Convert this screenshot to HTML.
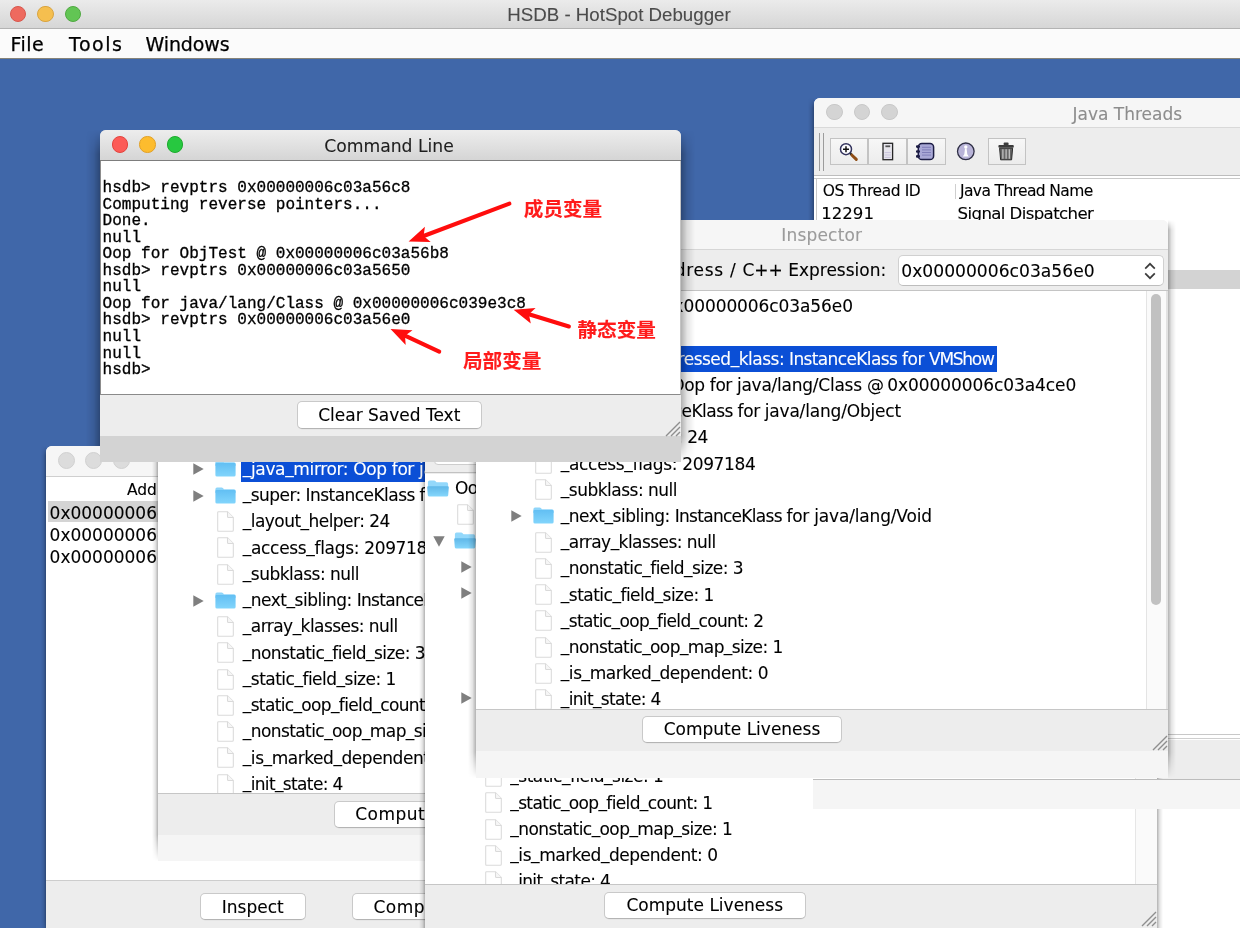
<!DOCTYPE html>
<html lang="zh"><head><meta charset="utf-8"><title>HSDB - HotSpot Debugger</title>
<style>
html,body{margin:0;padding:0}
body{width:1240px;height:928px;overflow:hidden;position:relative;background:#4067a9;font-family:"DejaVu Sans", "Liberation Sans", sans-serif;font-size:17px;color:#000;-webkit-font-smoothing:antialiased;-webkit-text-stroke:.1px currentColor}
#root{position:absolute;left:0;top:0;width:1240px;height:928px;overflow:hidden;will-change:transform}
*{box-sizing:border-box}
.abs,.win,.row,.lbl,.tl,.ico,.tri,.btn,.t{position:absolute}
.tl{border-radius:50%;border:1px solid;display:block}
.win{overflow:hidden;background:#fff}
.shl,.shr{position:absolute}
.shl{background:linear-gradient(to left,rgba(0,0,0,.30),rgba(0,0,0,.10) 45%,rgba(0,0,0,0))}
.shr{background:linear-gradient(to right,rgba(0,0,0,.30),rgba(0,0,0,.10) 45%,rgba(0,0,0,0))}
.row{left:0;height:26px;width:100%;white-space:pre}
.lbl{top:0;height:26.2px;line-height:27.4px;padding:0 1.5px;white-space:pre;font-size:17px}
.lbl i{font-style:normal;position:relative;top:-1.8px}
.lbl.sel{background:#0b4fd6;color:#fff;padding-right:3px}
.t{white-space:pre;line-height:20px}
.btn{background:#fff;border:1px solid #c9c9c9;border-bottom-color:#b4b4b4;border-radius:5px;text-align:center;white-space:pre;box-shadow:0 .5px 0 rgba(0,0,0,.06)}
.btn span{position:relative;display:inline-block}
.panel{position:absolute;background:#ededed}
.mono{font-family:"Liberation Mono","DejaVu Sans Mono",monospace}
.cn{position:absolute;font-family:"Liberation Sans","Noto Sans CJK SC","WenQuanYi Zen Hei",sans-serif;font-weight:bold;color:#ff1b1b;font-size:19.6px;line-height:24px;white-space:pre}
.grip{position:absolute}
</style></head><body>
<svg width="0" height="0" style="position:absolute">
<defs>
<linearGradient id="fg" x1="0" y1="0" x2="0" y2="1"><stop offset="0" stop-color="#62bff3"/><stop offset="1" stop-color="#82d5fc"/></linearGradient>
<linearGradient id="fg2" x1="0" y1="0" x2="0" y2="1"><stop offset="0" stop-color="#5fb7e8"/><stop offset="1" stop-color="#86d7fc"/></linearGradient>
<symbol id="folder" viewBox="0 0 21 17">
<path d="M0.4 2.2 Q0.4 0.5 2 0.5 L6.6 0.5 Q7.5 0.5 8.1 1.2 L9 2.3 L19 2.3 Q20.6 2.3 20.6 3.9 L20.6 6 L0.4 6Z" fill="#8ed5fa"/>
<path d="M0.4 4 Q0.4 2.9 1.5 2.9 L19.5 2.9 Q20.6 2.9 20.6 4 L20.6 15 Q20.6 16.6 19 16.6 L2 16.6 Q0.4 16.6 0.4 15Z" fill="url(#fg)"/>
</symbol>
<symbol id="folderopen" viewBox="0 0 22 17">
<path d="M0.9 2.2 Q0.9 0.5 2.5 0.5 L7.1 0.5 Q8 0.5 8.6 1.2 L9.5 2.3 L19.5 2.3 Q21.1 2.3 21.1 3.9 L21.1 9 L0.9 9Z" fill="#93d8fb"/>
<path d="M0.2 7.4 Q0.1 6.2 1.3 6.2 L20.7 6.2 Q21.9 6.2 21.8 7.4 L21.2 15.2 Q21.1 16.6 19.6 16.6 L2.4 16.6 Q0.9 16.6 0.8 15.2Z" fill="url(#fg2)"/>
</symbol>
<symbol id="file" viewBox="0 0 17 21">
<path d="M1.5 0.7 L10.5 0.7 L16.3 6.5 L16.3 19.3 Q16.3 20.3 15.3 20.3 L1.5 20.3 Q0.7 20.3 0.7 19.3 L0.7 1.5 Q0.7 0.7 1.5 0.7Z" fill="#fff" stroke="#dadada" stroke-width="1.05"/>
<path d="M10.5 0.7 L10.5 5.5 Q10.5 6.5 11.5 6.5 L16.3 6.5" fill="#f6f6f6" stroke="#dadada" stroke-width="1.05"/>
</symbol>
<symbol id="grip" viewBox="0 0 16 16">
<path d="M1 15 L15 1 M6 15 L15 6 M11 15 L15 11" stroke="#8e8e8e" stroke-width="1.35" fill="none"/>
</symbol>
</defs></svg>
<div id="root">

<!-- ===== main window chrome ===== -->
<div class="abs" style="left:0;top:0;width:1240px;height:28.5px;background:linear-gradient(#ebebeb,#d6d6d6);border-bottom:1px solid #b3b3b3"></div>
<i class="tl" style="left:9.75px;top:5.55px;width:16.5px;height:16.5px;background:#ee6a5f;border-color:#d8574d"></i><i class="tl" style="left:37.25px;top:5.55px;width:16.5px;height:16.5px;background:#f5bf4f;border-color:#d9a441"></i><i class="tl" style="left:64.75px;top:5.55px;width:16.5px;height:16.5px;background:#62c554;border-color:#50a942"></i>
<div class="t" style="left:0;width:1240px;top:4.5px;text-align:center;font-family:'Liberation Sans',sans-serif;font-size:18.7px;color:#4b4b4b;letter-spacing:0px"><span style="position:relative;left:-1px">HSDB - HotSpot Debugger</span></div>
<div class="abs" style="left:0;top:28.5px;width:1240px;height:30px;background:#fbfbfb;border-bottom:1.2px solid #868379"></div>
<div class="t" style="left:10.6px;top:33.8px;font-size:19px;letter-spacing:.45px;-webkit-text-stroke:.25px #000">File</div>
<div class="t" style="left:69px;top:33.8px;font-size:19px;letter-spacing:1.55px;-webkit-text-stroke:.25px #000">Tools</div>
<div class="t" style="left:145.5px;top:33.8px;font-size:19px;letter-spacing:-.12px;-webkit-text-stroke:.25px #000">Windows</div>

<!-- ===== Java Threads window ===== -->
<div class="shl" style="left:808px;top:98px;width:6px;height:830px;-webkit-mask-image:linear-gradient(to bottom,transparent,#000 10px,#000 calc(100% - 26px),transparent);mask-image:linear-gradient(to bottom,transparent,#000 10px,#000 calc(100% - 26px),transparent)"></div>
<div class="win" style="left:814px;top:98px;width:640px;height:830px;border-radius:6px 6px 0 0;background:#fff">
  <div class="abs" style="left:0;top:0;width:100%;height:29.5px;background:#f6f6f6;border-bottom:1px solid #d9d9d9"></div>
  <i class="tl" style="left:12.15px;top:5.75px;width:16.5px;height:16.5px;background:#d4d4d4;border-color:#c8c8c8"></i><i class="tl" style="left:39.65px;top:5.75px;width:16.5px;height:16.5px;background:#d4d4d4;border-color:#c8c8c8"></i><i class="tl" style="left:67.15px;top:5.75px;width:16.5px;height:16.5px;background:#d4d4d4;border-color:#c8c8c8"></i>
  <div class="t" style="left:258.5px;top:6px;color:#8d8d8d">Java Threads</div>
  <div class="abs" style="left:0;top:29.5px;width:100%;height:48px;background:#ededed;border-bottom:1.5px solid #bdbdbd"></div>
  <div class="abs" style="left:5px;top:34.5px;width:1px;height:38px;background:#9c9c9c"></div>
  <div class="abs" style="left:9px;top:34.5px;width:1px;height:38px;background:#9c9c9c"></div>
  <div class="abs tb" style="left:16.4px;top:40.3px;width:38px;height:27px;border:1px solid #c3c3c3;background:linear-gradient(#f7f7f7,#ececec)"></div>
  <div class="abs tb" style="left:53.9px;top:40.3px;width:39.5px;height:27px;border:1px solid #c3c3c3;background:linear-gradient(#f7f7f7,#ececec)"></div>
  <div class="abs tb" style="left:92.9px;top:40.3px;width:39.5px;height:27px;border:1px solid #c3c3c3;background:linear-gradient(#f7f7f7,#ececec)"></div>
  <div class="abs tb" style="left:173.5px;top:40.3px;width:38.5px;height:27px;border:1px solid #c3c3c3;background:linear-gradient(#f7f7f7,#ececec)"></div>
  <svg class="abs" style="left:16px;top:39.8px" width="200" height="32" viewBox="0 0 200 32">
    <!-- magnifier -->
    <circle cx="16" cy="11.2" r="5.5" fill="#fcfcff" stroke="#34345e" stroke-width="1.5"/>
    <path d="M13 11.2 H19 M16 8.2 V14.2" stroke="#111" stroke-width="1.5"/>
    <path d="M20.2 15.3 L22 17.1" stroke="#222" stroke-width="2.2"/>
    <path d="M22 17.2 L26.3 21.4" stroke="#8f4e16" stroke-width="3" stroke-linecap="round"/>
    <!-- doc -->
    <rect x="53" y="5.3" width="9.6" height="16.4" fill="#e6e5ec" stroke="#262626" stroke-width="1.3"/>
    <rect x="55.4" y="7.4" width="4.8" height="1.8" fill="#555"/>
    <path d="M54.6 14.6 H61 M54.6 17 H61 M54.6 19.4 H61" stroke="#c9c3dc" stroke-width="1"/>
    <!-- notebook -->
    <rect x="88.3" y="5.4" width="15.3" height="16.2" rx="3.6" fill="#a9a8d6" stroke="#1d1d45" stroke-width="1.5"/>
    <path d="M92 9.3 H101 M92 11.9 H101 M92 14.5 H101 M92 17.1 H101" stroke="#807eb9" stroke-width="1"/>
    <path d="M87.2 8.6 h1.6 M87.2 13.5 h1.6 M87.2 18.4 h1.6" stroke="#1d1d45" stroke-width="2.6" stroke-linecap="round"/>
    <!-- info circle -->
    <circle cx="135.8" cy="13.3" r="8.3" fill="#b9b4d8" stroke="#2f2f45" stroke-width="1.3"/>
    <circle cx="135.8" cy="9" r="1.7" fill="#fff"/>
    <path d="M135 10.4 L134.3 16.2 L132.8 18.4 L138.8 18.4 L137.3 16.2 L136.6 10.4Z" fill="#fff"/>
    <!-- trash -->
    <path d="M169.6 10.2 H182.6 L181.6 21.8 H170.6Z" fill="#666" stroke="#2a2a2a" stroke-width="1"/>
    <path d="M172.9 11.2 V20.8 M176.1 11.2 V20.8 M179.3 11.2 V20.8" stroke="#c9c9c9" stroke-width="1.2"/>
    <rect x="168.4" y="6.9" width="15.4" height="2.8" rx="1" fill="#3c3c3c"/>
    <rect x="173.6" y="4.6" width="5" height="2.6" rx="1" fill="#3c3c3c"/>
  </svg>
  <div class="abs" style="left:0;top:80px;width:100%;height:1.2px;background:#c9c9c9"></div>
  <div class="abs" style="left:2.3px;top:80px;width:1.2px;height:700px;background:#c9c9c9"></div>
  <div class="abs" style="left:141.3px;top:85.5px;width:1px;height:15px;background:#cfcfcf"></div>
  <div class="t" style="left:8.8px;top:83px;font-size:15.5px;letter-spacing:-.42px">OS Thread ID</div>
  <div class="t" style="left:146px;top:83px;font-size:15.5px;letter-spacing:-.62px">Java Thread Name</div>
  <div class="t" style="left:7.2px;top:106.2px;font-size:16.6px">12291</div>
  <div class="t" style="left:143.6px;top:106.2px;font-size:16.6px;letter-spacing:-.62px">Signal Dispatcher</div>
  <!-- right side artefacts -->
  <div class="abs" style="left:0;top:172px;width:100%;height:19.2px;background:#d3d3d3"></div>
  <div class="abs" style="left:0;top:635.6px;width:100%;height:1.4px;background:#c8c8c8"></div>
  <div class="abs" style="left:0;top:639.6px;width:100%;height:1.4px;background:#cfcfcf"></div>
  <div class="abs" style="left:0;top:641.5px;width:100%;height:40px;background:#ededed"></div>
</div>

<!-- ===== window 1 (bottom-left, liveness result) ===== -->
<div class="shl" style="left:41px;top:446px;width:5px;height:500px;-webkit-mask-image:linear-gradient(to bottom,transparent,#000 10px,#000 calc(100% - 26px),transparent);mask-image:linear-gradient(to bottom,transparent,#000 10px,#000 calc(100% - 26px),transparent)"></div>
<div class="win" style="left:46px;top:446px;width:520px;height:500px;border-radius:6px 6px 0 0">
  <div class="abs" style="left:0;top:0;width:100%;height:30.5px;background:#f6f6f6;border-bottom:1.3px solid #cfcfcf"></div>
  <i class="tl" style="left:11.80px;top:5.80px;width:17px;height:17px;background:#dcdcdc;border-color:#d0d0d0"></i><i class="tl" style="left:39.30px;top:5.80px;width:17px;height:17px;background:#dcdcdc;border-color:#d0d0d0"></i><i class="tl" style="left:66.80px;top:5.80px;width:17px;height:17px;background:#dcdcdc;border-color:#d0d0d0"></i>
  <div class="t" style="left:81px;top:34px;font-size:15.5px;letter-spacing:-.1px">Address</div>
  <div class="abs" style="left:2px;top:55px;width:300px;height:21px;background:#d4d4d4"></div>
  <div class="t" style="left:3.6px;top:56.5px">0x00000006c03a56b8</div>
  <div class="t" style="left:3.6px;top:78.8px">0x00000006c039e3c8</div>
  <div class="t" style="left:3.6px;top:101px">0x00000006c03a5650</div>
  <div class="panel" style="left:0;top:433.5px;width:100%;height:70px;border-top:1.3px solid #cdcdcd"></div>
  <div class="btn" style="left:154px;top:447.2px;width:105.5px;height:27px;line-height:26.4px">Inspect</div>
  <div class="btn" style="left:306px;top:447.2px;width:200px;height:27px;line-height:26.4px;text-align:left;padding-left:20.5px"><span style="letter-spacing:.45px">Comput</span>e Liveness</div>
</div>

<!-- ===== Inspector 2 ===== -->
<div class="shl" style="left:151.5px;top:380px;width:6px;height:481px;-webkit-mask-image:linear-gradient(to bottom,transparent,#000 10px,#000 calc(100% - 26px),transparent);mask-image:linear-gradient(to bottom,transparent,#000 10px,#000 calc(100% - 26px),transparent)"></div>
<div class="win" style="left:157.5px;top:380px;width:560px;height:481.3px;background:#f5f5f5">
  <div class="abs" style="left:0;top:0;width:100%;height:414.2px;background:#fff;border-bottom:1.2px solid #c6c6c6;overflow:hidden">
    <div class="row" style="top:-2.90px"><svg class="ico" style="left:1.70px;top:5px" width="22" height="17"><use href="#folderopen"/></svg><span class="lbl" style="left:28.50px;letter-spacing:-0.550px">Oop for ObjTest @ 0x00000006c03a56c8</span></div>
<div class="row" style="top:23.35px"><svg class="ico" style="left:32.00px;top:2.7px" width="17" height="21"><use href="#file"/></svg><span class="lbl" style="left:56.00px;letter-spacing:-0.550px"><i>_</i>mark: 1</span></div>
<div class="row" style="top:49.60px"><svg class="tri" style="left:8.00px;top:8.5px" width="12" height="11" viewBox="0 0 12 11"><path d="M0.3 0.3 L11.7 0.3 L6 10.7Z" fill="#7f7f7f"/></svg><svg class="ico" style="left:29.20px;top:5px" width="22" height="17"><use href="#folderopen"/></svg><span class="lbl" style="left:56.00px;letter-spacing:-0.550px"><i>_</i>metadata.<i>_</i>compressed<i>_</i>klass: InstanceKlass for ObjTest</span></div>
<div class="row" style="top:75.85px"><svg class="tri" style="left:35.80px;top:7.5px" width="11" height="12" viewBox="0 0 11 12"><path d="M0.3 0.3 L10.7 6 L0.3 11.7Z" fill="#7f7f7f"/></svg><svg class="ico" style="left:57.80px;top:4.5px" width="21" height="17"><use href="#folder"/></svg><span class="lbl sel" style="left:83.80px"><span style="letter-spacing:-0.357px"><i>_</i>java<i>_</i>mirror: Oop </span><span style="letter-spacing:-0.420px">for </span><span style="letter-spacing:-0.239px">java/lang/Class </span><span style="letter-spacing:-1.053px">@ </span><span style="letter-spacing:-0.075px">0x00000006c03a4ce0</span></span></div>
<div class="row" style="top:102.10px"><svg class="tri" style="left:35.80px;top:7.5px" width="11" height="12" viewBox="0 0 11 12"><path d="M0.3 0.3 L10.7 6 L0.3 11.7Z" fill="#7f7f7f"/></svg><svg class="ico" style="left:57.80px;top:4.5px" width="21" height="17"><use href="#folder"/></svg><span class="lbl" style="left:83.80px"><span style="letter-spacing:-0.551px"><i>_</i>super: InstanceKlass </span><span style="letter-spacing:-0.420px">for </span><span style="letter-spacing:-0.179px">java/lang/Object</span></span></div>
<div class="row" style="top:128.35px"><svg class="ico" style="left:59.80px;top:2.7px" width="17" height="21"><use href="#file"/></svg><span class="lbl" style="left:83.80px;letter-spacing:-0.545px"><i>_</i>layout<i>_</i>helper: 24</span></div>
<div class="row" style="top:154.60px"><svg class="ico" style="left:59.80px;top:2.7px" width="17" height="21"><use href="#file"/></svg><span class="lbl" style="left:83.80px"><span style="letter-spacing:-0.320px"><i>_</i>access<i>_</i>flags: </span><span style="letter-spacing:-0.360px">2097184</span></span></div>
<div class="row" style="top:180.85px"><svg class="ico" style="left:59.80px;top:2.7px" width="17" height="21"><use href="#file"/></svg><span class="lbl" style="left:83.80px;letter-spacing:-0.503px"><i>_</i>subklass: null</span></div>
<div class="row" style="top:207.10px"><svg class="tri" style="left:35.80px;top:7.5px" width="11" height="12" viewBox="0 0 11 12"><path d="M0.3 0.3 L10.7 6 L0.3 11.7Z" fill="#7f7f7f"/></svg><svg class="ico" style="left:57.80px;top:4.5px" width="21" height="17"><use href="#folder"/></svg><span class="lbl" style="left:83.80px"><span style="letter-spacing:-0.486px"><i>_</i>next<i>_</i>sibling: </span><span style="letter-spacing:-0.708px">InstanceKlass </span><span style="letter-spacing:-0.270px">for </span><span style="letter-spacing:-0.165px">java/lang/Void</span></span></div>
<div class="row" style="top:233.35px"><svg class="ico" style="left:59.80px;top:2.7px" width="17" height="21"><use href="#file"/></svg><span class="lbl" style="left:83.80px;letter-spacing:-0.546px"><i>_</i>array<i>_</i>klasses: null</span></div>
<div class="row" style="top:259.60px"><svg class="ico" style="left:59.80px;top:2.7px" width="17" height="21"><use href="#file"/></svg><span class="lbl" style="left:83.80px;letter-spacing:-0.563px"><i>_</i>nonstatic<i>_</i>field<i>_</i>size: 3</span></div>
<div class="row" style="top:285.85px"><svg class="ico" style="left:59.80px;top:2.7px" width="17" height="21"><use href="#file"/></svg><span class="lbl" style="left:83.80px;letter-spacing:-0.509px"><i>_</i>static<i>_</i>field<i>_</i>size: 1</span></div>
<div class="row" style="top:312.10px"><svg class="ico" style="left:59.80px;top:2.7px" width="17" height="21"><use href="#file"/></svg><span class="lbl" style="left:83.80px;letter-spacing:-0.645px"><i>_</i>static<i>_</i>oop<i>_</i>field<i>_</i>count: 1</span></div>
<div class="row" style="top:338.35px"><svg class="ico" style="left:59.80px;top:2.7px" width="17" height="21"><use href="#file"/></svg><span class="lbl" style="left:83.80px;letter-spacing:-0.581px"><i>_</i>nonstatic<i>_</i>oop<i>_</i>map<i>_</i>size: 1</span></div>
<div class="row" style="top:364.60px"><svg class="ico" style="left:59.80px;top:2.7px" width="17" height="21"><use href="#file"/></svg><span class="lbl" style="left:83.80px;letter-spacing:-0.441px"><i>_</i>is<i>_</i>marked<i>_</i>dependent: 0</span></div>
<div class="row" style="top:390.85px"><svg class="ico" style="left:59.80px;top:2.7px" width="17" height="21"><use href="#file"/></svg><span class="lbl" style="left:83.80px;letter-spacing:-0.643px"><i>_</i>init<i>_</i>state: 4</span></div>
  </div>
  <div class="panel" style="left:0;top:414.2px;width:100%;height:40.8px"></div>
  <div class="btn" style="left:176.3px;top:420.5px;width:200px;height:27px;line-height:24.6px;text-align:left;padding-left:20.5px"><span style="letter-spacing:.45px">Comput</span>e Liveness</div>
</div>

<!-- ===== Inspector 3 ===== -->
<div class="shl" style="left:419px;top:400px;width:6px;height:560px;-webkit-mask-image:linear-gradient(to bottom,transparent,#000 10px,#000 calc(100% - 26px),transparent);mask-image:linear-gradient(to bottom,transparent,#000 10px,#000 calc(100% - 26px),transparent)"></div><div class="shr" style="left:1157px;top:400px;width:6px;height:560px;-webkit-mask-image:linear-gradient(to bottom,transparent,#000 10px,#000 calc(100% - 26px),transparent);mask-image:linear-gradient(to bottom,transparent,#000 10px,#000 calc(100% - 26px),transparent)"></div>
<div class="win" style="left:425px;top:400px;width:732px;height:540px;background:#ededed">
  <div class="abs" style="left:0;top:0;width:100%;height:73.4px;background:#ededed;border-bottom:1.5px solid #c2c2c2"></div>
  <div class="abs" style="left:9px;top:40px;width:300px;height:24.5px;background:#fff;border:1px solid #cdcdcd;border-radius:4px"></div>
  <div class="abs" style="left:0;top:73.5px;width:710px;height:411px;background:#fff;overflow:hidden">
    <div class="row" style="top:1.50px"><svg class="ico" style="left:1.70px;top:5px" width="22" height="17"><use href="#folderopen"/></svg><span class="lbl" style="left:28.50px;letter-spacing:-0.550px">Oop for java/lang/Class @ 0x00000006c03a5650</span></div>
<div class="row" style="top:27.72px"><svg class="ico" style="left:32.00px;top:2.7px" width="17" height="21"><use href="#file"/></svg><span class="lbl" style="left:56.00px;letter-spacing:-0.550px"><i>_</i>mark: 1</span></div>
<div class="row" style="top:53.94px"><svg class="tri" style="left:8.00px;top:8.5px" width="12" height="11" viewBox="0 0 12 11"><path d="M0.3 0.3 L11.7 0.3 L6 10.7Z" fill="#7f7f7f"/></svg><svg class="ico" style="left:29.20px;top:5px" width="22" height="17"><use href="#folderopen"/></svg><span class="lbl" style="left:56.00px;letter-spacing:-0.550px"><i>_</i>metadata.<i>_</i>compressed<i>_</i>klass: InstanceKlass for java/lang/Class</span></div>
<div class="row" style="top:80.16px"><svg class="tri" style="left:35.80px;top:7.5px" width="11" height="12" viewBox="0 0 11 12"><path d="M0.3 0.3 L10.7 6 L0.3 11.7Z" fill="#7f7f7f"/></svg><svg class="ico" style="left:57.80px;top:4.5px" width="21" height="17"><use href="#folder"/></svg><span class="lbl" style="left:83.80px"><span style="letter-spacing:-0.357px"><i>_</i>java<i>_</i>mirror: Oop </span><span style="letter-spacing:-0.420px">for </span><span style="letter-spacing:-0.239px">java/lang/Class </span><span style="letter-spacing:-1.053px">@ </span><span style="letter-spacing:-0.075px">0x00000006c03a4ce0</span></span></div>
<div class="row" style="top:106.38px"><svg class="tri" style="left:35.80px;top:7.5px" width="11" height="12" viewBox="0 0 11 12"><path d="M0.3 0.3 L10.7 6 L0.3 11.7Z" fill="#7f7f7f"/></svg><svg class="ico" style="left:57.80px;top:4.5px" width="21" height="17"><use href="#folder"/></svg><span class="lbl" style="left:83.80px"><span style="letter-spacing:-0.551px"><i>_</i>super: InstanceKlass </span><span style="letter-spacing:-0.420px">for </span><span style="letter-spacing:-0.179px">java/lang/Object</span></span></div>
<div class="row" style="top:132.60px"><svg class="ico" style="left:59.80px;top:2.7px" width="17" height="21"><use href="#file"/></svg><span class="lbl" style="left:83.80px;letter-spacing:-0.545px"><i>_</i>layout<i>_</i>helper: 24</span></div>
<div class="row" style="top:158.82px"><svg class="ico" style="left:59.80px;top:2.7px" width="17" height="21"><use href="#file"/></svg><span class="lbl" style="left:83.80px"><span style="letter-spacing:-0.320px"><i>_</i>access<i>_</i>flags: </span><span style="letter-spacing:-0.360px">2097184</span></span></div>
<div class="row" style="top:185.04px"><svg class="ico" style="left:59.80px;top:2.7px" width="17" height="21"><use href="#file"/></svg><span class="lbl" style="left:83.80px;letter-spacing:-0.503px"><i>_</i>subklass: null</span></div>
<div class="row" style="top:211.26px"><svg class="tri" style="left:35.80px;top:7.5px" width="11" height="12" viewBox="0 0 11 12"><path d="M0.3 0.3 L10.7 6 L0.3 11.7Z" fill="#7f7f7f"/></svg><svg class="ico" style="left:57.80px;top:4.5px" width="21" height="17"><use href="#folder"/></svg><span class="lbl" style="left:83.80px"><span style="letter-spacing:-0.486px"><i>_</i>next<i>_</i>sibling: </span><span style="letter-spacing:-0.708px">InstanceKlass </span><span style="letter-spacing:-0.270px">for </span><span style="letter-spacing:-0.165px">java/lang/Void</span></span></div>
<div class="row" style="top:237.48px"><svg class="ico" style="left:59.80px;top:2.7px" width="17" height="21"><use href="#file"/></svg><span class="lbl" style="left:83.80px;letter-spacing:-0.546px"><i>_</i>array<i>_</i>klasses: null</span></div>
<div class="row" style="top:263.70px"><svg class="ico" style="left:59.80px;top:2.7px" width="17" height="21"><use href="#file"/></svg><span class="lbl" style="left:83.80px;letter-spacing:-0.563px"><i>_</i>nonstatic<i>_</i>field<i>_</i>size: 3</span></div>
<div class="row" style="top:289.92px"><svg class="ico" style="left:59.80px;top:2.7px" width="17" height="21"><use href="#file"/></svg><span class="lbl" style="left:83.80px;letter-spacing:-0.509px"><i>_</i>static<i>_</i>field<i>_</i>size: 1</span></div>
<div class="row" style="top:316.14px"><svg class="ico" style="left:59.80px;top:2.7px" width="17" height="21"><use href="#file"/></svg><span class="lbl" style="left:83.80px;letter-spacing:-0.645px"><i>_</i>static<i>_</i>oop<i>_</i>field<i>_</i>count: 1</span></div>
<div class="row" style="top:342.36px"><svg class="ico" style="left:59.80px;top:2.7px" width="17" height="21"><use href="#file"/></svg><span class="lbl" style="left:83.80px;letter-spacing:-0.581px"><i>_</i>nonstatic<i>_</i>oop<i>_</i>map<i>_</i>size: 1</span></div>
<div class="row" style="top:368.58px"><svg class="ico" style="left:59.80px;top:2.7px" width="17" height="21"><use href="#file"/></svg><span class="lbl" style="left:83.80px;letter-spacing:-0.441px"><i>_</i>is<i>_</i>marked<i>_</i>dependent: 0</span></div>
<div class="row" style="top:394.80px"><svg class="ico" style="left:59.80px;top:2.7px" width="17" height="21"><use href="#file"/></svg><span class="lbl" style="left:83.80px;letter-spacing:-0.643px"><i>_</i>init<i>_</i>state: 4</span></div>
  </div>
  <div class="abs" style="left:709.5px;top:73.5px;width:22.5px;height:411px;background:#fafafa;border-left:1px solid #e6e6e6"></div>
  <div class="abs" style="left:0;top:484px;width:100%;height:1.3px;background:#c6c6c6"></div>
  <div class="btn" style="left:179px;top:491.5px;width:201.5px;height:27.5px;line-height:24.4px">Compute Liveness</div>
  <svg class="grip" style="left:715.5px;top:511px" width="16" height="16"><use href="#grip"/></svg>
</div>

<!-- band artefact -->
<div class="abs" style="left:813px;top:778.5px;width:427px;height:30.5px;background:#f5f5f5;border-top:1.6px solid #bcbcbc"></div>

<!-- ===== Inspector 4 (front inspector) ===== -->
<div class="shl" style="left:467.5px;top:219.5px;width:8px;height:558.5px;-webkit-mask-image:linear-gradient(to bottom,transparent,#000 10px,#000 calc(100% - 26px),transparent);mask-image:linear-gradient(to bottom,transparent,#000 10px,#000 calc(100% - 26px),transparent)"></div><div class="shr" style="left:1168.0px;top:219.5px;width:8px;height:558.5px;-webkit-mask-image:linear-gradient(to bottom,transparent,#000 10px,#000 calc(100% - 26px),transparent);mask-image:linear-gradient(to bottom,transparent,#000 10px,#000 calc(100% - 26px),transparent)"></div>
<div class="win" style="left:475.5px;top:219.5px;width:692.5px;height:558.5px;border-radius:6px 6px 0 0;background:#f5f5f5">
  <div class="abs" style="left:0;top:0;width:100%;height:30px;background:#f6f6f6;border-bottom:1.2px solid #d6d6d6"></div>
  <div class="t" style="left:0;width:100%;top:5.6px;text-align:center;color:#9b9b9b;letter-spacing:.2px">Inspector</div>
  <div class="panel" style="left:0;top:30px;width:100%;height:41px;border-bottom:1.3px solid #c4c4c4"></div>
  <div class="t" style="right:281.8px;top:40.4px"><span style="letter-spacing:.69px">Address / </span>C++ Expression:</div>
  <div class="abs" style="left:422.5px;top:35.8px;width:266px;height:31.2px;background:#fff;border:1px solid #d0d0d0;border-bottom-color:#bdbdbd;border-radius:5px"></div>
  <div class="t" style="left:425.8px;top:41.8px;font-size:17.15px">0x00000006c03a56e0</div>
  <svg class="abs" style="left:666px;top:40px" width="16" height="22" viewBox="0 0 16 22"><path d="M3.2 8.6 L8 3.8 L12.8 8.6 M3.2 13.4 L8 18.2 L12.8 13.4" fill="none" stroke="#3c3c3c" stroke-width="1.7"/></svg>
  <div class="abs" style="left:0;top:71px;width:670px;height:418px;background:#fff;overflow:hidden">
    <div class="row" style="top:2.80px"><svg class="ico" style="left:1.70px;top:5px" width="22" height="17"><use href="#folderopen"/></svg><span class="lbl" style="left:28.50px"><span style="letter-spacing:-0.673px">Oop for VMShow @ </span><span style="letter-spacing:-0.090px">0x00000006c03a56e0</span></span></div>
<div class="row" style="top:29.00px"><svg class="ico" style="left:32.00px;top:2.7px" width="17" height="21"><use href="#file"/></svg><span class="lbl" style="left:56.00px;letter-spacing:-0.550px"><i>_</i>mark: 1</span></div>
<div class="row" style="top:55.20px"><svg class="tri" style="left:8.00px;top:8.5px" width="12" height="11" viewBox="0 0 12 11"><path d="M0.3 0.3 L11.7 0.3 L6 10.7Z" fill="#7f7f7f"/></svg><svg class="ico" style="left:29.20px;top:5px" width="22" height="17"><use href="#folderopen"/></svg><span class="lbl sel" style="left:56.00px"><span style="letter-spacing:-0.492px"><i>_</i>metadata.<i>_</i>compressed<i>_</i>klass: </span><span style="letter-spacing:-0.630px">InstanceKlass </span><span style="letter-spacing:-0.420px">for </span><span style="letter-spacing:-1.279px">VMShow</span></span></div>
<div class="row" style="top:81.40px"><svg class="tri" style="left:35.80px;top:7.5px" width="11" height="12" viewBox="0 0 11 12"><path d="M0.3 0.3 L10.7 6 L0.3 11.7Z" fill="#7f7f7f"/></svg><svg class="ico" style="left:57.80px;top:4.5px" width="21" height="17"><use href="#folder"/></svg><span class="lbl" style="left:83.80px"><span style="letter-spacing:-0.357px"><i>_</i>java<i>_</i>mirror: Oop </span><span style="letter-spacing:-0.420px">for </span><span style="letter-spacing:-0.239px">java/lang/Class </span><span style="letter-spacing:-1.053px">@ </span><span style="letter-spacing:-0.075px">0x00000006c03a4ce0</span></span></div>
<div class="row" style="top:107.60px"><svg class="tri" style="left:35.80px;top:7.5px" width="11" height="12" viewBox="0 0 11 12"><path d="M0.3 0.3 L10.7 6 L0.3 11.7Z" fill="#7f7f7f"/></svg><svg class="ico" style="left:57.80px;top:4.5px" width="21" height="17"><use href="#folder"/></svg><span class="lbl" style="left:83.80px"><span style="letter-spacing:-0.551px"><i>_</i>super: InstanceKlass </span><span style="letter-spacing:-0.420px">for </span><span style="letter-spacing:-0.179px">java/lang/Object</span></span></div>
<div class="row" style="top:133.80px"><svg class="ico" style="left:59.80px;top:2.7px" width="17" height="21"><use href="#file"/></svg><span class="lbl" style="left:83.80px;letter-spacing:-0.545px"><i>_</i>layout<i>_</i>helper: 24</span></div>
<div class="row" style="top:160.00px"><svg class="ico" style="left:59.80px;top:2.7px" width="17" height="21"><use href="#file"/></svg><span class="lbl" style="left:83.80px"><span style="letter-spacing:-0.320px"><i>_</i>access<i>_</i>flags: </span><span style="letter-spacing:-0.360px">2097184</span></span></div>
<div class="row" style="top:186.20px"><svg class="ico" style="left:59.80px;top:2.7px" width="17" height="21"><use href="#file"/></svg><span class="lbl" style="left:83.80px;letter-spacing:-0.503px"><i>_</i>subklass: null</span></div>
<div class="row" style="top:212.40px"><svg class="tri" style="left:35.80px;top:7.5px" width="11" height="12" viewBox="0 0 11 12"><path d="M0.3 0.3 L10.7 6 L0.3 11.7Z" fill="#7f7f7f"/></svg><svg class="ico" style="left:57.80px;top:4.5px" width="21" height="17"><use href="#folder"/></svg><span class="lbl" style="left:83.80px"><span style="letter-spacing:-0.486px"><i>_</i>next<i>_</i>sibling: </span><span style="letter-spacing:-0.708px">InstanceKlass </span><span style="letter-spacing:-0.270px">for </span><span style="letter-spacing:-0.165px">java/lang/Void</span></span></div>
<div class="row" style="top:238.60px"><svg class="ico" style="left:59.80px;top:2.7px" width="17" height="21"><use href="#file"/></svg><span class="lbl" style="left:83.80px;letter-spacing:-0.546px"><i>_</i>array<i>_</i>klasses: null</span></div>
<div class="row" style="top:264.80px"><svg class="ico" style="left:59.80px;top:2.7px" width="17" height="21"><use href="#file"/></svg><span class="lbl" style="left:83.80px;letter-spacing:-0.563px"><i>_</i>nonstatic<i>_</i>field<i>_</i>size: 3</span></div>
<div class="row" style="top:291.00px"><svg class="ico" style="left:59.80px;top:2.7px" width="17" height="21"><use href="#file"/></svg><span class="lbl" style="left:83.80px;letter-spacing:-0.509px"><i>_</i>static<i>_</i>field<i>_</i>size: 1</span></div>
<div class="row" style="top:317.20px"><svg class="ico" style="left:59.80px;top:2.7px" width="17" height="21"><use href="#file"/></svg><span class="lbl" style="left:83.80px;letter-spacing:-0.629px"><i>_</i>static<i>_</i>oop<i>_</i>field<i>_</i>count: 2</span></div>
<div class="row" style="top:343.40px"><svg class="ico" style="left:59.80px;top:2.7px" width="17" height="21"><use href="#file"/></svg><span class="lbl" style="left:83.80px;letter-spacing:-0.581px"><i>_</i>nonstatic<i>_</i>oop<i>_</i>map<i>_</i>size: 1</span></div>
<div class="row" style="top:369.60px"><svg class="ico" style="left:59.80px;top:2.7px" width="17" height="21"><use href="#file"/></svg><span class="lbl" style="left:83.80px;letter-spacing:-0.441px"><i>_</i>is<i>_</i>marked<i>_</i>dependent: 0</span></div>
<div class="row" style="top:395.80px"><svg class="ico" style="left:59.80px;top:2.7px" width="17" height="21"><use href="#file"/></svg><span class="lbl" style="left:83.80px;letter-spacing:-0.643px"><i>_</i>init<i>_</i>state: 4</span></div>
  </div>
  <div class="abs" style="left:670px;top:71px;width:22.5px;height:418px;background:#fafafa;border-left:1px solid #e4e4e4;border-right:2.5px solid #e2e2e2"></div>
  <div class="abs" style="left:675.3px;top:74px;width:10.4px;height:311px;border-radius:5.2px;background:#c1c1c1"></div>
  <div class="panel" style="left:0;top:489px;width:100%;height:42.3px;border-top:1.3px solid #c6c6c6"></div>
  <div class="btn" style="left:166.5px;top:496.8px;width:200px;height:27.2px;line-height:24.8px">Compute Liveness</div>
  <svg class="grip" style="left:676px;top:515px" width="16" height="16"><use href="#grip"/></svg>
</div>

<!-- ===== Command Line window ===== -->
<div class="shl" style="left:85.5px;top:130px;width:14px;height:316px;-webkit-mask-image:linear-gradient(to bottom,transparent,#000 24px);mask-image:linear-gradient(to bottom,transparent,#000 24px)"></div><div class="shr" style="left:680.5px;top:130px;width:14px;height:331.5px;-webkit-mask-image:linear-gradient(to bottom,transparent,#000 24px,#000 calc(100% - 26px),transparent);mask-image:linear-gradient(to bottom,transparent,#000 24px,#000 calc(100% - 26px),transparent)"></div>
<div class="win" style="left:99.5px;top:130px;width:581px;height:332.2px;border-radius:6px 6px 0 0;background:#d3d3d3">
  <div class="abs" style="left:0;top:0;width:100%;height:30.8px;background:linear-gradient(#ededed,#d5d5d5);border-bottom:1.2px solid #7d7d7d"></div>
  <i class="tl" style="left:12.25px;top:6.05px;width:16.5px;height:16.5px;background:#fc5b57;border-color:#e2443e"></i><i class="tl" style="left:39.75px;top:6.05px;width:16.5px;height:16.5px;background:#fdbc2e;border-color:#e0a028"></i><i class="tl" style="left:67.25px;top:6.05px;width:16.5px;height:16.5px;background:#27c840;border-color:#1eab2e"></i>
  <div class="t" style="left:0;width:100%;top:5.7px;text-align:center;color:#1e1e1e;font-size:17.2px"><span style="position:relative;left:-1px">Command Line</span></div>
  <div class="abs" style="left:0;top:30.8px;width:100%;height:234px;background:#fff;border-bottom:1.3px solid #8a8a8a;border-left:1px solid #8c8c8c;border-right:1px solid #c4c4c4"></div>
  <pre class="mono abs" style="left:3.1px;top:50.1px;margin:0;font-size:16.05px;line-height:16.55px;color:#000;-webkit-text-stroke:.3px #000">hsdb&gt; revptrs 0x00000006c03a56c8
Computing reverse pointers...
Done.
null
Oop for ObjTest @ 0x00000006c03a56b8
hsdb&gt; revptrs 0x00000006c03a5650
null
Oop for java/lang/Class @ 0x00000006c039e3c8
hsdb&gt; revptrs 0x00000006c03a56e0
null
null
hsdb&gt;</pre>
  <svg class="abs" style="left:0;top:0" width="581" height="331" viewBox="99.5 130 581 331">
    <line x1="508.9" y1="203.6" x2="423.1" y2="236.0" stroke="#ff0d0d" stroke-width="4.1" stroke-linecap="round"/><polygon points="408.1,241.6 424.4,226.7 423.1,236.0 430.2,242.0" fill="#ff0d0d"/>
    <line x1="568.4" y1="326.5" x2="528.4" y2="314.3" stroke="#ff0d0d" stroke-width="4.1" stroke-linecap="round"/><polygon points="513.1,309.7 535.1,307.9 528.4,314.3 530.3,323.5" fill="#ff0d0d"/>
    <line x1="438.7" y1="351.6" x2="404.5" y2="335.7" stroke="#ff0d0d" stroke-width="4.1" stroke-linecap="round"/><polygon points="390.0,329.0 412.0,330.2 404.5,335.7 405.2,345.0" fill="#ff0d0d"/>
  </svg>
  <div class="cn" style="left:424.3px;top:66.5px">成员变量</div>
  <div class="cn" style="left:478px;top:187.5px">静态变量</div>
  <div class="cn" style="left:363.5px;top:218.5px">局部变量</div>
  <div class="panel" style="left:0;top:264.8px;width:100%;height:41.7px"></div>
  <div class="btn" style="left:197px;top:271.3px;width:185.5px;height:27.4px;line-height:26.8px">Clear Saved Text</div>
  <svg class="grip" style="left:565px;top:290.5px" width="16" height="16"><use href="#grip"/></svg>
</div>
</div>
</body></html>
